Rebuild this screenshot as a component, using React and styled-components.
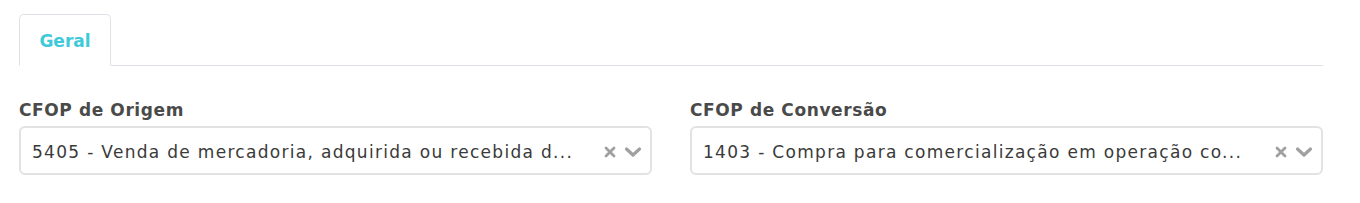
import styled, { createGlobalStyle } from "styled-components";

const GlobalStyle = createGlobalStyle`
  body {
    margin: 0;
    background: #fff;
    font-family: "DejaVu Sans", "Liberation Sans", sans-serif;
  }
`;

const Page = styled.div`
  padding: 14px 37px 0 19px;
`;

const TabBar = styled.div`
  display: flex;
  border-bottom: 1px solid #dee2e6;
  height: 51px;
`;

const Tab = styled.div`
  width: 92px;
  height: 52px;
  margin-bottom: -1px;
  box-sizing: border-box;
  display: flex;
  align-items: center;
  justify-content: center;
  border: 1px solid #dee2e6;
  border-bottom-color: ${(p) => (p.active ? "#fff" : "#dee2e6")};
  border-radius: 5px 5px 0 0;
  background: #fff;
  color: #40c9da;
  font-size: 17px;
  font-weight: 700;
  padding-top: 1px;
`;

const Row = styled.div`
  display: grid;
  grid-template-columns: 1fr 1fr;
  column-gap: 38px;
  margin-top: 33px;
`;

const Field = styled.div`
  display: flex;
  flex-direction: column;
`;

const Label = styled.label`
  font-size: 17px;
  font-weight: 700;
  letter-spacing: 0.6px;
  color: #4a4a4a;
  line-height: 22px;
  margin-bottom: 5px;
`;

const Select = styled.div`
  height: 49px;
  box-sizing: border-box;
  border: 2px solid #e2e2e2;
  border-radius: 6px;
  display: flex;
  align-items: center;
  padding: 0 8px 0 11px;
`;

const Value = styled.span`
  flex: 1;
  font-size: 17px;
  letter-spacing: 1.3px;
  color: #3a3a3a;
  white-space: nowrap;
  overflow: hidden;
  text-overflow: ellipsis;
  padding-top: 3px;
`;

const Icons = styled.div`
  display: flex;
  align-items: center;
  gap: 8px;
  color: #a0a0a0;
  padding-top: 2px;
`;

const ClearIcon = () => (
  <svg width="12" height="12" viewBox="0 0 12 12">
    <path d="M2 2 L10 10 M10 2 L2 10" stroke="currentColor" strokeWidth="2.8" strokeLinecap="round" />
  </svg>
);

const ChevronIcon = () => (
  <svg width="18" height="12" viewBox="0 0 18 12">
    <path d="M2.5 3 L9 9 L15.5 3" stroke="currentColor" strokeWidth="3.2" fill="none" strokeLinecap="round" strokeLinejoin="round" />
  </svg>
);

const SelectField = ({ label, value }) => (
  <Field>
    <Label>{label}</Label>
    <Select>
      <Value>{value}</Value>
      <Icons>
        <ClearIcon />
        <ChevronIcon />
      </Icons>
    </Select>
  </Field>
);

export default function App() {
  return (
    <>
      <GlobalStyle />
      <Page>
        <TabBar>
          <Tab active>Geral</Tab>
        </TabBar>
        <Row>
          <SelectField
            label="CFOP de Origem"
            value="5405 - Venda de mercadoria, adquirida ou recebida d..."
          />
          <SelectField
            label="CFOP de Conversão"
            value="1403 - Compra para comercialização em operação co..."
          />
        </Row>
      </Page>
    </>
  );
}
